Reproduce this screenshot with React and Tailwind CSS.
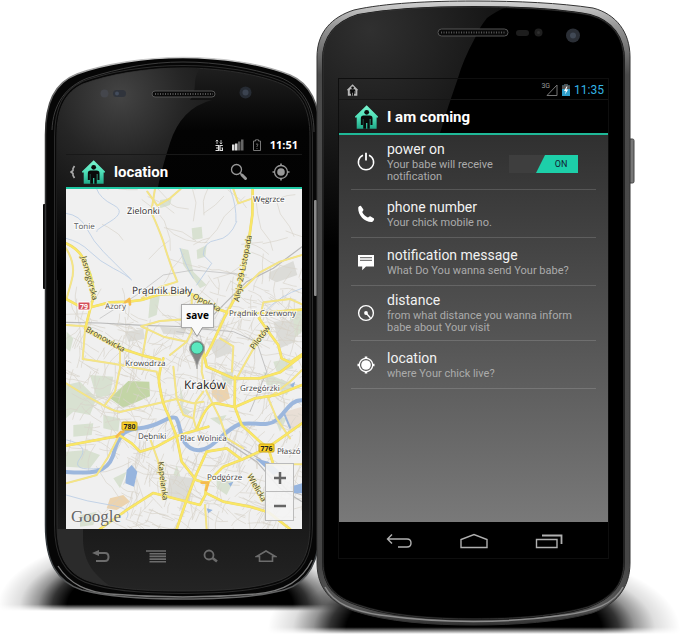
import React from "react";

/* ---------- map data (drawn on a 708 x 1020 grid, offset 18,12) ---------- */

function makeStreets(seed, count, area, length, grid) {
  let s = seed;
  const rnd = () => {
    s = (s * 1664525 + 1013904223) % 4294967296;
    return s / 4294967296;
  };
  let d = "";
  for (let i = 0; i < count; i++) {
    let x = area[0] + rnd() * area[2];
    let y = area[1] + rnd() * area[3];
    let a = grid ? 0.35 + Math.floor(rnd() * 4) * (Math.PI / 2) + (rnd() - 0.5) * 0.5 : rnd() * Math.PI * 2;
    d += `M${Math.round(x)} ${Math.round(y)}`;
    const steps = 2 + Math.floor(rnd() * 3);
    for (let j = 0; j < steps; j++) {
      const l = length * (0.4 + rnd());
      x += Math.cos(a) * l;
      y += Math.sin(a) * l;
      a += (rnd() - 0.5) * 0.8;
      d += `L${Math.round(x)} ${Math.round(y)}`;
    }
  }
  return d;
}

const ruralStreets = makeStreets(7, 95, [18, 12, 708, 1020], 42, false);
const cityStreets = makeStreets(23, 240, [200, 400, 520, 420], 20, true);
const southStreets = makeStreets(91, 170, [180, 800, 546, 230], 22, true);
const westStreets = makeStreets(55, 90, [18, 400, 230, 420], 24, true);
const eastStreets = makeStreets(37, 70, [470, 270, 256, 180], 20, true);

const mainRoads = [
  "M18 342L55 362L95 366L150 352L205 350L245 345L300 328L390 325L420 340L460 368L500 381L600 384L726 374",
  "M578 12L577 90L566 170L552 245L530 330L492 400L455 480L438 512",
  "M18 175Q66 196 84 250Q112 318 92 366L76 430",
  "M76 430L130 465L182 490L250 512L300 524",
  "M445 725L410 735L345 755L290 785L240 800L215 775L180 752L110 765L18 782",
  "M310 520Q290 580 300 610Q308 660 325 690L350 755L365 830L408 885L440 895",
  "M425 480L440 545L520 580L600 580L660 562L726 512",
  "M410 735Q440 650 470 655L525 666L585 640L650 630L726 600",
  "M525 575L524 665L545 720L600 770L625 790L640 838",
  "M350 1032L385 930L408 870L440 800L500 790L545 824L620 790L726 715",
  "M120 1032L200 975L280 924L350 942L420 960L436 930L440 895L490 845L545 824",
  "M440 925L490 950L570 965L626 982L690 1032",
  "M597 400L625 440L655 480L665 520L690 532L726 508",
];
const minorRoads = [
  "M285 12Q280 40 274 82Q296 130 310 170Q330 240 352 290L300 306L245 340",
  "M262 20L292 62L330 40L362 12",
  "M520 12L535 55L578 40",
  "M18 190Q50 240 34 290L20 340",
  "M726 210L660 230L600 262L556 305L525 328",
  "M18 420L76 424L68 522L160 536L290 560L300 600",
  "M244 424L300 408L385 402",
  "M244 424L310 455L380 470L395 440L395 330",
  "M262 430L248 510",
  "M18 595Q90 640 120 655Q150 675 180 681L350 642",
  "M135 660L165 620L180 550L180 490",
  "M600 400L610 352L690 342L726 358",
  "M620 430L575 500L530 580",
  "M330 510L380 470",
  "M340 545L350 640L370 690L400 700L410 735",
  "M350 642L400 655L430 650",
  "M430 480L425 560L440 620L480 700L500 760L550 790",
  "M400 700L408 650L430 620",
  "M18 895L75 880L110 870L145 815L175 755",
  "M270 760L295 830L315 920",
  "M435 960L440 1032",
  "M726 838L620 838",
  "M625 640L650 700L690 760",
  "M480 460L520 484L516 560",
  "M726 555L690 590L625 640",
];

const labels = [
  { t: "Węgrzce", x: 253, y: 202, s: 8 },
  { t: "Zielonki", x: 127, y: 214, s: 9 },
  { t: "Tonie", x: 74, y: 229, s: 8, c: "#555" },
  { t: "Prądnik Biały", x: 132, y: 294, s: 10 },
  { t: "Azory", x: 105, y: 309, s: 8, c: "#555" },
  { t: "Prądnik Czerwony", x: 229, y: 316, s: 8, c: "#444" },
  { t: "Krowodrza", x: 125, y: 366, s: 8, c: "#444" },
  { t: "Kraków", x: 184, y: 389, s: 12, c: "#222" },
  { t: "Grzegórzki", x: 240, y: 391, s: 8, c: "#444" },
  { t: "Dębniki", x: 138, y: 439, s: 8, c: "#444" },
  { t: "Plac Wolnica", x: 180, y: 441, s: 8, c: "#444" },
  { t: "Płaszó", x: 277, y: 454, s: 8, c: "#444" },
  { t: "Podgórze", x: 207, y: 480, s: 8, c: "#444" },
];

const streetNames = [
  { t: "Jasnogórska", x: 81, y: 257, r: 75 },
  { t: "Aleja 29 Listopada", x: 239, y: 302, r: -79 },
  { t: "Opolska", x: 192, y: 298, r: 27 },
  { t: "Bronowicka", x: 85, y: 331, r: 29 },
  { t: "Pilotów", x: 254, y: 350, r: -53 },
  { t: "Kapelanka", x: 158, y: 462, r: 83 },
  { t: "Wielicka", x: 247, y: 476, r: 60 },
];

const shields = [
  { t: "79", x: 78, y: 302, w: 12, fill: "#d4505a", stroke: "#ffffff", c: "#ffffff" },
  { t: "780", x: 122, y: 422, w: 15, fill: "#fbd22b", stroke: "#caa414", c: "#222222" },
  { t: "776", x: 259, y: 444, w: 15, fill: "#fbd22b", stroke: "#caa414", c: "#222222" },
];

function CityMap() {
  return (
    <svg viewBox="66 189 236 340" preserveAspectRatio="xMidYMid slice" className="block h-full w-full font-['Open_Sans','Noto_Sans',sans-serif] [text-rendering:geometricPrecision]" role="img" aria-label="Map of Kraków">
      <rect x="66" y="189" width="236" height="340" fill="#f0f0f0" />
      <g transform="translate(60 185) scale(0.33333)" fill="none" strokeLinejoin="round" strokeLinecap="round">
        <g fill="#d8e1d1">
          <path d="M395 130L425 125L428 160L398 165ZM360 190L385 195L400 260L440 300L420 310L370 240ZM300 45L335 40L330 60L300 70ZM410 195L440 180L436 215L412 222Z" />
          <path d="M18 600L60 590L110 640L90 690L40 680L18 700ZM130 690L180 700L175 740L130 730ZM18 800L80 795L120 810L90 850L18 845ZM40 720L100 715L95 750L40 755Z" />
          <path d="M90 570L160 575L150 630L110 640ZM270 340L300 330L290 390L265 400ZM690 380L726 370V440L690 470ZM640 530L690 520L700 550L650 560Z" />
          <path d="M610 560L700 600L680 630L620 600ZM350 840L370 900L340 870ZM640 690L680 700L660 740ZM200 860L160 880L180 910ZM450 700L500 690L480 720ZM360 600L372 650L362 680ZM470 880L520 890L500 930L470 910ZM60 990L110 980L100 1020L60 1025Z" />
          <path d="M355 660L395 680L375 690ZM20 440L40 460L30 500L18 490ZM480 560L520 560L515 600L490 590Z" />
        </g>
        <path d="M150 640L205 588L268 590L270 634L190 668Z" fill="#c3d5a6" />
        <g fill="#dcdcd8">
          <path d="M628 262L700 228L712 270L650 292L626 280ZM195 440L250 432L254 462L205 470ZM640 410L700 405L706 470L660 490ZM440 470L500 460L520 500L470 520ZM330 870L400 880L390 950L320 930ZM300 425L380 430L370 450L310 446Z" />
        </g>
        <path d="M455 600L500 600L510 640L480 655L455 630ZM150 940L190 930L210 950L170 975L140 970Z" fill="#ecd3ae" />
        <path d="M675 680L726 665V720L690 735Z" fill="#e9dfd6" />
        <g stroke="#d8d3ca" strokeWidth="2">
          <path d={ruralStreets} />
          <path d={cityStreets} />
          <path d={southStreets} />
          <path d={westStreets} />
          <path d={eastStreets} />
        </g>
        <g stroke="#b9cce4" strokeWidth="2.5">
          <path d="M18 85Q60 90 80 130T130 200T210 280" />
          <path d="M18 160Q60 170 90 200T160 250T215 285" />
          <path d="M110 12Q120 40 160 60T150 110T110 140" />
          <path d="M530 110Q510 160 470 165T430 210L455 235L410 300" />
          <path d="M510 12Q530 60 528 110" />
          <path d="M610 384Q660 330 726 310" />
          <path d="M360 190Q380 250 400 280" />
          <path d="M20 765Q90 780 60 820T120 850" />
          <path d="M18 930Q80 950 150 960T200 1000" />
        </g>
        <g stroke="#b9b9b9" strokeWidth="3.5">
          <path d="M18 412L120 414L250 421L400 426L450 400L500 350L560 290L640 250L726 185" />
          <path d="M120 400L230 330L310 270L400 255L560 270" strokeWidth="2" />
          <path d="M400 430L520 440L590 470L620 560L570 680" strokeWidth="2.5" />
          <path d="M500 770L590 830L660 910L726 950M515 770L600 822L680 915L726 930" />
          <path d="M350 440L420 450L440 530" strokeWidth="2" />
        </g>
        <g fill="#96b4de">
          <path d="M200 855L215 840L232 860L222 905L196 895ZM585 820L625 830L660 860L640 870ZM690 905L726 895V925L700 925ZM690 600L705 590L700 610ZM440 970L458 975L445 985ZM505 895L520 890L512 905Z" />
        </g>
        <path d="M18 861C95 866 140 865 158 815C178 735 200 733 250 728C300 722 325 690 348 699C365 720 355 792 415 796C460 795 490 735 540 717C590 710 620 728 650 705C680 680 690 645 726 646" stroke="#9cb7dd" strokeWidth="12" />
        <path d="M670 680L690 728" stroke="#9cb7dd" strokeWidth="6" />
        <g stroke="#e9dc9a" strokeWidth="6">{minorRoads.map((d) => <path key={d} d={d} />)}</g>
        <g stroke="#f6e683" strokeWidth="4">{minorRoads.map((d) => <path key={d} d={d} />)}</g>
        <g stroke="#e6d470" strokeWidth="8">{mainRoads.map((d) => <path key={d} d={d} />)}</g>
        <g stroke="#fae765" strokeWidth="6">{mainRoads.map((d) => <path key={d} d={d} />)}</g>
        <g stroke="#f5bb4f" strokeWidth="8">
          <path d="M170 755L182 742L190 740M425 893L445 893L438 915M196 352L208 342L210 358" />
        </g>
      </g>
      {streetNames.map((l) => (
        <text key={l.t} x={l.x} y={l.y} fontSize="8" fill="#3f3f34" stroke="#faf0a0" strokeWidth="1" paintOrder="stroke" transform={`rotate(${l.r} ${l.x} ${l.y})`}>{l.t}</text>
      ))}
      {labels.map((l) => (
        <text key={l.t} x={l.x} y={l.y} fontSize={l.s} fill={l.c || "#333"} stroke="#ffffff" strokeWidth="2" strokeOpacity="0.8" paintOrder="stroke">{l.t}</text>
      ))}
      {shields.map((l) => (
        <g key={l.t}>
          <rect x={l.x} y={l.y} width={l.w} height="8" rx="1" fill={l.fill} stroke={l.stroke} />
          <text x={l.x + l.w / 2} y={l.y + 7} textAnchor="middle" fontSize="7" fontWeight="700" fill={l.c}>{l.t}</text>
        </g>
      ))}
    </svg>
  );
}

/* ---------- icons ---------- */

function HouseIcon({ className, mono }) {
  return (
    <svg viewBox="0 0 67 69" className={className} aria-hidden="true">
      <defs>
        <linearGradient id="house" x1="0" y1="0" x2="0" y2="1">
          <stop offset="0" stopColor="#7df5d0" />
          <stop offset="0.5" stopColor="#4fe0b8" />
          <stop offset="1" stopColor="#1fa888" />
        </linearGradient>
      </defs>
      <path d="M34 0L67 33V36H63V69H5V36H0V33Z" fill={mono ? "#b8b8b8" : "url(#house)"} />
      <circle cx="34" cy="21" r={mono ? 8 : 7} fill="#0a0a0a" />
      <path d="M17 38Q17 30 25 30H43Q51 30 51 38V58H45V40H43V69H36V52H32V69H24V40H23V58H17Z" fill="#0a0a0a" />
    </svg>
  );
}

const TargetIcon = ({ className, fill }) => (
  <svg viewBox="0 0 20 20" className={className} fill="none" stroke="currentColor" aria-hidden="true">
    <circle cx="10" cy="10" r={fill ? 6.7 : 6.5} strokeWidth="1.3" />
    <circle cx="10" cy="10" r={fill ? 4.8 : 3.8} fill="currentColor" stroke="none" />
    <path d="M10 1.5V4M10 16V18.500M1.500 10H4M16 10H18.500" strokeWidth={fill ? 2.6 : 1.6} />
  </svg>
);

const PowerIcon = () => (
  <svg viewBox="0 0 20 20" className="size-5" fill="none" stroke="currentColor" strokeWidth="1.5" aria-hidden="true">
    <path d="M7 3.200A7.600 7.600 0 1 0 13 3.200" />
    <path d="M10 .8V8.500" strokeWidth="1.800" />
  </svg>
);

const PhoneIcon = () => (
  <svg viewBox="0 0 20 20" className="size-5" fill="currentColor" aria-hidden="true">
    <path d="M2.200 3.800C2.400 2.600 4 1.600 5 1.900L7.400 5.500C7.700 6.300 6.600 7.300 6.200 8C7.300 10.500 9.300 12.500 11.900 13.600C12.700 13.200 13.300 12 14.300 12.200L18 14.600C18.500 15.800 17.200 17.700 15.800 18C8.500 18.200 1.900 11.500 2.200 3.800Z" />
  </svg>
);

const MessageIcon = () => (
  <svg viewBox="0 0 20 20" className="size-5" aria-hidden="true">
    <path d="M2 3H18V14.500H10L6.200 18.200V14.500H2Z" fill="currentColor" />
    <path d="M4 5.700H16M4 8.300H16" stroke="#777" strokeWidth="1.300" />
  </svg>
);

const DistanceIcon = () => (
  <svg viewBox="0 0 20 20" className="size-5" fill="none" stroke="currentColor" aria-hidden="true">
    <circle cx="10" cy="10" r="7.400" strokeWidth="1.400" />
    <circle cx="10" cy="10" r="1.900" fill="currentColor" stroke="none" />
    <path d="M10 10L14.500 15" strokeWidth="1.400" />
  </svg>
);

/* ---------- device bodies ---------- */

const body1 = "M45.500 135C45.500 103 54 83 77 74C104 64 145 57.500 183 57.500C222 57.500 262 64 290 75C311 84 320 106 320 135V525C320 562 308 583 284 590C258 597 220 599 183 599C146 599 108 597 82 590C57 582 45.500 562 45.500 525Z";
const inner1 = "M57 137C57 107 66 92 83 84C110 74 147 68 183 68C219 68 258 74 282 84C300 92 310 107 310 137V525C310 556 300 572 280 580C255 589 219 591 183 591C147 591 110 589 86 580C67 572 57 556 57 525Z";
const body2 = "M317 57C317 32 332 17 354 10C385 3 430 1 474 1C518 1 560 3 593 8C616 14 630 32 630 57V563C630 589 615 605 592 613C560 622 515 625 474 625C432 625 387 622 354 611C332 603 317 589 317 563Z";
const inner2 = "M323 60C323 36 336 22 358 15C390 9 430 7 474 7C518 7 560 9 590 15C612 21 624 37 624 60V562C624 586 610 599 588 607C558 616 515 619 474 619C432 619 389 616 358 605C336 598 323 586 323 562Z";

function LeftBody() {
  return (
    <svg viewBox="0 0 316 640" className="pointer-events-none absolute left-0 top-0 h-[640px] w-[316px] overflow-visible" aria-hidden="true">
      <defs>
        <radialGradient id="shadow">
          <stop offset="0.62" stopColor="#000" />
          <stop offset="0.7" stopColor="#000" stopOpacity="0.8" />
          <stop offset="0.78" stopColor="#000" stopOpacity="0.42" />
          <stop offset="0.88" stopColor="#000" stopOpacity="0.13" />
          <stop offset="1" stopColor="#000" stopOpacity="0" />
        </radialGradient>
        <linearGradient id="fade1" x1="0" y1="0" x2="0" y2="1">
          <stop offset="0" stopColor="#fff" />
          <stop offset="0.94" stopColor="#fff" />
          <stop offset="1" stopColor="#000" />
        </linearGradient>
        <mask id="floor1" maskUnits="userSpaceOnUse" x="-20" y="500" width="420" height="111"><rect x="-20" y="500" width="420" height="111" fill="url(#fade1)" /></mask>
        <linearGradient id="rim1" x1="0" y1="57" x2="0" y2="599" gradientUnits="userSpaceOnUse">
          <stop offset="0" stopColor="#d0d0d0" />
          <stop offset="0.05" stopColor="#777" />
          <stop offset="0.12" stopColor="#333" />
          <stop offset="0.9" stopColor="#30363a" />
          <stop offset="1" stopColor="#666" />
        </linearGradient>
        <linearGradient id="face1" x1="0" y1="68" x2="0" y2="591" gradientUnits="userSpaceOnUse">
          <stop offset="0" stopColor="#1f1f1f" />
          <stop offset="0.12" stopColor="#030303" />
          <stop offset="0.6" stopColor="#000" />
          <stop offset="0.88" stopColor="#1a1a1a" />
          <stop offset="1" stopColor="#242424" />
        </linearGradient>
        <radialGradient id="gloss1" cx="120" cy="95" r="185" gradientUnits="userSpaceOnUse">
          <stop offset="0" stopColor="#444" />
          <stop offset="0.35" stopColor="#252525" />
          <stop offset="1" stopColor="#000" />
        </radialGradient>
        <clipPath id="clip1"><path d={inner1} /></clipPath>
      </defs>
      <ellipse cx="180" cy="606" rx="182" ry="76" fill="url(#shadow)" mask="url(#floor1)" />
      <rect x="43" y="204" width="5" height="85" rx="1" fill="#0a0a0a" />
      <path d={body1} fill="#060606" stroke="url(#rim1)" strokeWidth="1.500" />
      <path d={inner1} fill="url(#face1)" stroke="#2b2b2b" strokeWidth="6" />
      <path d={inner1} fill="url(#face1)" stroke="#080808" strokeWidth="4" />
      <path d={inner1} fill="url(#face1)" stroke="#2c2c2c" strokeWidth="1" />
      <g clipPath="url(#clip1)">
        <path d="M50 60H213Q196 66 195 82Q195 94 190 100H212Q181 108 170 143Q161 170 157 192L140 280H50Z" fill="url(#gloss1)" />
        <path d="M50 529H83V540C84 563 94 576 116 590H50Z" fill="#2b2b2b" />
      </g>
      <path d="M52 130C53 104 66 86 88 78C120 68 150 62 183 62C218 62 250 68 279 77C302 86 314 105 314 132" fill="none" stroke="#3c3c3c" />
      <path d="M58 566C70 585 88 592 110 594Q183 600 256 594C286 591 302 580 312 560" fill="none" stroke="#777" strokeWidth="1.300" />
      <rect x="314" y="200" width="3" height="96" rx="1" fill="#8b8b8b" />
      <rect x="152" y="91" width="63" height="6" rx="3" fill="#0a0a0a" stroke="#555" />
      <path d="M155 94H213" stroke="#555" strokeWidth="2" strokeDasharray="1 1.500" />
      <circle cx="104.500" cy="93.500" r="4" fill="#44464c" />
      <rect x="113" y="90" width="13" height="7" rx="3.500" fill="#30343c" />
      <circle cx="117" cy="93.500" r="2" fill="#434c5c" />
      <circle cx="245.500" cy="92.500" r="6" fill="#262b33" />
      <circle cx="245.500" cy="92.500" r="3" fill="#3b4350" />
    </svg>
  );
}

function RightBody() {
  return (
    <svg viewBox="316 0 371 640" className="pointer-events-none absolute left-0 top-0 h-[640px] w-[371px] overflow-visible" aria-hidden="true">
      <defs>
        <linearGradient id="fade2" x1="0" y1="0" x2="0" y2="1">
          <stop offset="0" stopColor="#fff" />
          <stop offset="0.94" stopColor="#fff" />
          <stop offset="1" stopColor="#000" />
        </linearGradient>
        <mask id="floor2" maskUnits="userSpaceOnUse" x="250" y="520" width="437" height="114"><rect x="250" y="520" width="437" height="114" fill="url(#fade2)" /></mask>
        <linearGradient id="rim2" x1="0" y1="0" x2="0" y2="625" gradientUnits="userSpaceOnUse">
          <stop offset="0" stopColor="#d5d5d5" />
          <stop offset="0.04" stopColor="#999" />
          <stop offset="0.12" stopColor="#4a4a4a" />
          <stop offset="0.9" stopColor="#454545" />
          <stop offset="0.97" stopColor="#555" />
          <stop offset="1" stopColor="#333" />
        </linearGradient>
        <radialGradient id="gloss2" cx="370" cy="30" r="220" gradientUnits="userSpaceOnUse">
          <stop offset="0" stopColor="#303030" />
          <stop offset="0.5" stopColor="#191919" />
          <stop offset="1" stopColor="#000" />
        </radialGradient>
        <clipPath id="clip2"><path d={inner2} /></clipPath>
      </defs>
      <ellipse cx="474" cy="629" rx="206" ry="84" fill="url(#shadow)" mask="url(#floor2)" />
      <rect x="628" y="139" width="6" height="44" rx="1.500" fill="#777" stroke="#444" />
      <path d={body2} fill="url(#rim2)" stroke="#333" strokeWidth="1" />
      <path d={inner2} fill="#000" stroke="#111" strokeWidth="2" />
      <g clipPath="url(#clip2)">
        <path d="M320 0H525Q500 8 487 18Q479 28 475 38Q463 60 458 78Q448 106 440 133L425 250H320Z" fill="url(#gloss2)" />
      </g>
      <path d={inner2} fill="none" stroke="#333" strokeWidth="1" />
      <path d="M325 587C334 604 354 611 380 615Q474 628 565 615C594 611 614 604 623 587" fill="none" stroke="#8c8c8c" strokeWidth="1.500" />
      <rect x="438" y="29" width="70" height="7" rx="3.500" fill="#0a0a0a" stroke="#555" />
      <path d="M441 32.500H506" stroke="#555" strokeWidth="2" strokeDasharray="1 1.500" />
      <rect x="516" y="30" width="13" height="6" rx="3" fill="#1d1d1d" />
      <circle cx="538.500" cy="32.500" r="4" fill="#1f1f1f" />
      <circle cx="538.500" cy="32.500" r="1.500" fill="#303030" />
      <circle cx="573" cy="35.500" r="7" fill="#2b2f36" />
      <circle cx="573" cy="35.500" r="3" fill="#414955" />
    </svg>
  );
}

/* ---------- left device: location screen ---------- */

function LocationScreen() {
  return (
    <section aria-label="Location" className="relative w-[316px] shrink-0 pl-[66px] pr-[14px] pt-[136px] text-white">
      <LeftBody />
      <div className="relative">
        <div className="flex h-[19px] items-center justify-end gap-2 border-b border-[#181818] pr-1">
          <svg viewBox="0 0 8 12" className="h-3 w-2" aria-hidden="true">
            <path d="M2 5V1M.8 2.300L2 1L3.200 2.300M6 1V5M4.800 3.700L6 5L7.200 3.700" stroke="#ccc" fill="none" strokeWidth=".9" />
            <path d="M.5 6.500H3.500V11.500H.5M1 9H3.500M7.800 6.500H5V11.500H7.500V9H6.500" stroke="#ddd" fill="none" strokeWidth="1.200" />
          </svg>
          <svg viewBox="0 0 13 12" className="h-3 w-[13px]" aria-hidden="true">
            <path d="M1 5.500H3.500V11.500H1ZM4 4.500H6.500V11.500H4Z" fill="#ddd" />
            <path d="M7 2.500H9.500V11.500H7ZM10 .5H12.500V11.500H10Z" fill="#666" />
          </svg>
          <svg viewBox="0 0 10 12" className="h-3 w-[10px]" aria-hidden="true" fill="none" stroke="#777">
            <path d="M1.500 2H3.500V.8H6.500V2H8.500V11.500H1.500Z" />
            <path d="M4 5.500Q5 4 6 5.500Q6 6.300 5 7V8M5 9V10" strokeWidth=".9" />
          </svg>
          <span className="font-['Open_Sans','Noto_Sans',sans-serif] text-[11px] font-bold leading-4">11:51</span>
        </div>
        <header className="flex h-[34px] items-center border-b-2 border-[#1fc9a4] pt-[2px]">
          <button type="button" aria-label="Back" className="flex h-full w-4 items-center pl-1">
            <svg viewBox="0 0 6 14" className="h-[14px] w-[6px]" fill="none" stroke="#aaa" strokeWidth="1.600" aria-hidden="true"><path d="M4.500 1L3 3.500V5.500L1 7L3 8.500V10.500L4.500 13" /></svg>
          </button>
          <HouseIcon className="h-6 w-[23px]" />
          <h1 className="ml-[9px] flex-1 font-[Roboto,sans-serif] text-[15px] font-bold leading-5">location</h1>
          <button type="button" aria-label="Search" className="flex h-full w-[42px] items-center justify-center text-[#999]">
            <svg viewBox="0 0 18 18" className="size-[18px]" fill="none" stroke="currentColor" aria-hidden="true">
              <circle cx="6.500" cy="6.500" r="5" strokeWidth="1.300" />
              <path d="M10.200 10.200L12 12" strokeWidth="1.500" />
              <path d="M12 12L15.500 15.500" strokeWidth="3" strokeLinecap="round" />
            </svg>
          </button>
          <button type="button" aria-label="My location" className="flex h-full w-[42px] items-center justify-center text-[#999]"><TargetIcon className="size-5" /></button>
        </header>
        <div className="relative h-[340px] overflow-hidden">
          <CityMap />
          <button type="button" className="absolute left-[115px] top-[115px] h-6 w-[33px] border border-[#aaa] bg-[#fafafa] pb-[2px] font-['Open_Sans','Noto_Sans',sans-serif] text-[10px] font-bold leading-5 text-black shadow">
            save
          </button>
          <svg viewBox="0 0 20 44" className="absolute left-[121px] top-[138px] h-[44px] w-5" aria-hidden="true">
            <path d="M4.500 0H15.500L10 9Z" fill="#fafafa" />
            <path d="M4.500 .5L10 9.500L15.500 .5" fill="none" stroke="#999" />
            <path d="M10 13.500A8 8 0 0 0 2.500 23C4 28 9 32 10 42C11 32 16 28 17.500 23A8 8 0 0 0 10 13.500Z" fill="#858585" stroke="#aaa" strokeWidth=".8" />
            <circle cx="10" cy="21" r="6" fill="#5ae8bf" stroke="#39876f" strokeWidth=".7" />
          </svg>
          <span className="absolute bottom-0 left-[5px] font-['Liberation_Serif',serif] text-[17px] leading-[25px] text-[#666] [text-shadow:0_0_2px_#fff]">Google</span>
          <div className="absolute bottom-2 right-2 flex w-[29px] flex-col border border-[#bbb] bg-[#f4f4f4]/90">
            <button type="button" aria-label="Zoom in" className="flex h-7 items-center justify-center border-b border-[#bbb]">
              <svg viewBox="0 0 12 12" className="size-3" stroke="#666" strokeWidth="2.500" aria-hidden="true"><path d="M6 0V12M0 6H12" /></svg>
            </button>
            <button type="button" aria-label="Zoom out" className="flex h-7 items-center justify-center">
              <svg viewBox="0 0 12 12" className="size-3" stroke="#666" strokeWidth="2.500" aria-hidden="true"><path d="M0 6H12" /></svg>
            </button>
          </div>
        </div>
        <nav aria-label="Device keys" className="grid h-[53px] grid-cols-4 pl-[7px] pr-[9px] text-[#6c6c6c]">
          <button type="button" aria-label="Back key" className="flex items-center justify-center">
            <svg viewBox="0 0 18 14" className="h-[14px] w-[18px]" fill="none" stroke="currentColor" strokeWidth="2" aria-hidden="true"><path d="M5 4H13Q16.500 4 16.500 8T13 12H4" /><path d="M7 1V7L0 4Z" fill="currentColor" stroke="none" /></svg>
          </button>
          <button type="button" aria-label="Menu key" className="flex items-center justify-center">
            <svg viewBox="0 0 20 14" className="h-[14px] w-5" stroke="currentColor" strokeWidth="1.600" aria-hidden="true"><path d="M0 2H20M3.500 4.700H20M3.500 7.400H20M3.500 10.100H20M3.500 12.800H20" /></svg>
          </button>
          <button type="button" aria-label="Search key" className="flex items-center justify-center">
            <svg viewBox="0 0 16 14" className="h-[14px] w-4" fill="none" stroke="currentColor" aria-hidden="true"><circle cx="6" cy="6" r="4.500" strokeWidth="1.800" /><path d="M9.500 9L14 12.500" strokeWidth="2.600" /></svg>
          </button>
          <button type="button" aria-label="Home key" className="flex items-center justify-center">
            <svg viewBox="0 0 22 14" className="h-[14px] w-[22px]" fill="none" stroke="currentColor" strokeWidth="1.600" aria-hidden="true"><path d="M4.500 7.500H1.500L11 2L20.500 7.500H17.500V12.200H4.500Z" /></svg>
          </button>
        </nav>
      </div>
    </section>
  );
}

/* ---------- right device: settings screen ---------- */

const rows = [
  { title: "phone number", note: "Your chick mobile no.", icon: <PhoneIcon /> },
  { title: "notification message", note: "What Do You wanna send Your babe?", icon: <MessageIcon /> },
  { title: "distance", note: "from what distance you wanna inform babe about Your visit", icon: <DistanceIcon /> },
  { title: "location", note: "where Your chick live?", icon: <TargetIcon className="size-5" fill /> },
];

function RowText({ title, note }) {
  return (
    <span className="ml-[6px] flex min-w-0 flex-1 flex-col gap-[2px]">
      <span className="text-[14px] leading-4 text-[#f2f2f2]">{title}</span>
      <span className="text-[11px] leading-3 text-[#ababab]">{note}</span>
    </span>
  );
}

function SettingsScreen() {
  return (
    <section aria-label="I am coming" className="relative w-[371px] shrink-0 pl-[23px] pr-[79px] pt-[79px] font-[Roboto,sans-serif] text-white">
      <RightBody />
      <div className="relative outline outline-[#0e0e0e]">
        <div className="flex h-[21px] items-center border-b border-[#161616] pl-2 pr-1 pt-[2px]">
          <HouseIcon mono className="h-3 w-[11px]" />
          <div className="ml-auto flex items-center gap-1">
            <span className="self-start text-[7px] leading-2 text-[#999]">3G</span>
            <svg viewBox="0 0 12 12" className="-ml-2 h-3 w-3" fill="none" stroke="#777" aria-hidden="true"><path d="M11 1V11.500H1Z" /></svg>
            <svg viewBox="0 0 8 12" className="h-3 w-2" aria-hidden="true">
              <path d="M0 1.500H2.500V0H5.500V1.500H8V12H0Z" fill="#2f9fcb" />
              <path d="M0 1.500H2.500V0H5.500V1.500H8V5H0Z" fill="#555" />
              <path d="M4.500 2.500L2 7H3.800L3 10.500L6.200 5.500H4.300L5.500 2.500Z" fill="#fff" />
            </svg>
            <span className="text-[12px] leading-4 text-[#33b5e5]">11:35</span>
          </div>
        </div>
        <header className="flex h-[35px] items-center border-b-2 border-[#1fb998] pl-4">
          <HouseIcon className="h-6 w-[23px]" />
          <h1 className="ml-[9px] text-[15px] font-bold leading-5">I am coming</h1>
        </header>
        <ul className="h-[387px] bg-linear-to-b from-[#303030] to-[#797979] px-3">
          <li className="border-b border-white/15">
            <label className="flex items-center py-[6px] pr-[18px]">
              <span className="flex w-[30px] justify-center"><PowerIcon /></span>
              <RowText title="power on" note="Your babe will receive notification" />
              <input type="checkbox" role="switch" defaultChecked className="peer sr-only" />
              <span className="mt-1 flex h-[18px] w-[69px] justify-end bg-[#3e3e3e]">
                <span className="w-[42px] bg-[#1dcfa9] pl-2 text-center text-[9px] leading-[18px] text-[#123] [clip-path:polygon(9px_0,100%_0,100%_100%,0_100%)]">ON</span>
              </span>
            </label>
          </li>
          {rows.map((r) => (
            <li key={r.title} className="border-b border-white/15">
              <button type="button" className="flex min-h-[47px] w-full items-center py-[6px] pr-4 text-left">
                <span className="flex w-[30px] justify-center">{r.icon}</span>
                <RowText title={r.title} note={r.note} />
              </button>
            </li>
          ))}
        </ul>
        <nav aria-label="Navigation" className="grid h-9 grid-cols-3 px-[22px] pt-[2px] text-[#b0b0b0]">
          <button type="button" aria-label="Back" className="flex items-center justify-center">
            <svg viewBox="0 0 26 16" className="h-4 w-[26px]" fill="none" stroke="currentColor" strokeWidth="1.400" aria-hidden="true"><path d="M2 6H21Q25 6 25 10T21 14H12M6 1.500L1.500 6L6 10.500" /></svg>
          </button>
          <button type="button" aria-label="Home" className="flex items-center justify-center">
            <svg viewBox="0 0 28 16" className="h-4 w-7" fill="none" stroke="currentColor" strokeWidth="1.400" aria-hidden="true"><path d="M1 14.500V6.500L14 1.500L27 6.500V14.500Z" /></svg>
          </button>
          <button type="button" aria-label="Recent apps" className="flex items-center justify-center">
            <svg viewBox="0 0 28 16" className="h-4 w-7" fill="none" stroke="currentColor" strokeWidth="1.400" aria-hidden="true"><path d="M1.500 6.500H22V14.500H1.500Z" /><path d="M7 2.500H26.500V11" strokeWidth="1.800" /></svg>
          </button>
        </nav>
      </div>
    </section>
  );
}

export default function App() {
  return (
    <main className="flex min-h-screen items-start justify-center overflow-hidden bg-white">
      <LocationScreen />
      <SettingsScreen />
    </main>
  );
}
